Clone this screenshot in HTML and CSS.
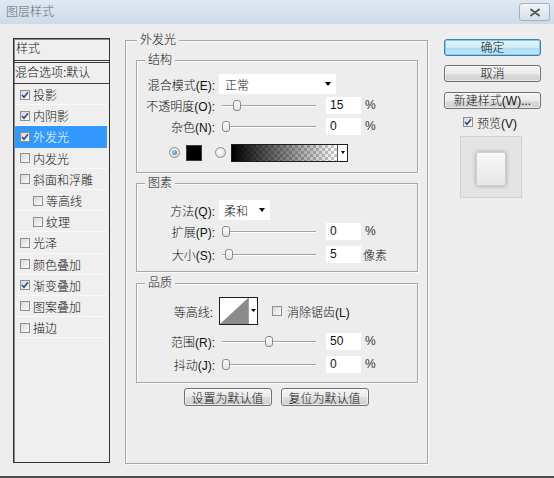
FILE: index.html
```html
<!DOCTYPE html>
<html lang="zh-CN">
<head>
<meta charset="utf-8">
<title>图层样式</title>
<link rel="stylesheet" href="styles.css">
</head>
<body>
<div class="window">
  <div class="titlebar">
    <span class="title">图层样式</span>
    <span class="close"><svg width="12" height="9" viewBox="0 0 12 9"><path d="M2 1.5 L10 7.5 M10 1.5 L2 7.5" stroke="#5a5a5a" stroke-width="2" stroke-linecap="round"/></svg></span>
  </div>
  <div class="content">
    <div class="list">
      <div class="list-head">样式</div>
      <div class="list-blend">混合选项:默认</div>
      <div class="item"><span class="cb"><svg width="8" height="8" viewBox="0 0 8 8"><path d="M1 4 L3 6.2 L7 1.3" fill="none" stroke="#2b4a8a" stroke-width="1.6"/></svg></span>投影</div>
      <div class="item"><span class="cb"><svg width="8" height="8" viewBox="0 0 8 8"><path d="M1 4 L3 6.2 L7 1.3" fill="none" stroke="#2b4a8a" stroke-width="1.6"/></svg></span>内阴影</div>
      <div class="item sel"><span class="cb"><svg width="8" height="8" viewBox="0 0 8 8"><path d="M1 4 L3 6.2 L7 1.3" fill="none" stroke="#2b4a8a" stroke-width="1.6"/></svg></span>外发光</div>
      <div class="item"><span class="cb"></span>内发光</div>
      <div class="item"><span class="cb"></span>斜面和浮雕</div>
      <div class="item sub"><span class="cb"></span>等高线</div>
      <div class="item sub"><span class="cb"></span>纹理</div>
      <div class="item"><span class="cb"></span>光泽</div>
      <div class="item"><span class="cb"></span>颜色叠加</div>
      <div class="item"><span class="cb"><svg width="8" height="8" viewBox="0 0 8 8"><path d="M1 4 L3 6.2 L7 1.3" fill="none" stroke="#2b4a8a" stroke-width="1.6"/></svg></span>渐变叠加</div>
      <div class="item"><span class="cb"></span>图案叠加</div>
      <div class="item"><span class="cb"></span>描边</div>
    </div>

    <div class="main">
      <div class="group outer">
        <span class="legend lg-outer">外发光</span>

        <div class="group g1">
          <span class="legend">结构</span>
          <div class="row r20">
            <span class="lbl">混合模式(E):</span>
            <div class="select w-blend"><span>正常</span><i class="arrow"></i></div>
          </div>
          <div class="row r18 mt2">
            <span class="lbl">不透明度(O):</span>
            <div class="slider"><span class="thumb" style="left:11px"></span></div>
            <div class="num">15</div><span class="unit">%</span>
          </div>
          <div class="row r18 mt3">
            <span class="lbl">杂色(N):</span>
            <div class="slider"><span class="thumb" style="left:0px"></span></div>
            <div class="num">0</div><span class="unit">%</span>
          </div>
          <div class="row r19 mt8 colors">
            <span class="radio on"></span>
            <span class="swatch"></span>
            <span class="radio"></span>
            <div class="grad"><span class="grad-fill"></span><span class="grad-arrow"><i class="arrow small"></i></span></div>
          </div>
        </div>

        <div class="group g2">
          <span class="legend">图素</span>
          <div class="row r20">
            <span class="lbl">方法(Q):</span>
            <div class="select w-method"><span>柔和</span><i class="arrow"></i></div>
          </div>
          <div class="row r18 mt2">
            <span class="lbl">扩展(P):</span>
            <div class="slider"><span class="thumb" style="left:0px"></span></div>
            <div class="num">0</div><span class="unit">%</span>
          </div>
          <div class="row r18 mt5">
            <span class="lbl">大小(S):</span>
            <div class="slider"><span class="thumb" style="left:3px"></span></div>
            <div class="num">5</div><span class="unit unit-px">像素</span>
          </div>
        </div>

        <div class="group g3">
          <span class="legend">品质</span>
          <div class="row r28">
            <span class="lbl lbl-contour">等高线:</span>
            <svg class="contour" width="39" height="28" viewBox="0 0 39 28">
              <rect x="0.5" y="0.5" width="38" height="27" fill="#fff" stroke="#1e1e1e"/>
              <polygon points="1,27 29,1 29,27" fill="#8b8b8b"/>
              <line x1="29.5" y1="1" x2="29.5" y2="27" stroke="#a0a0a0"/>
              <polygon points="32,12 37,12 34.5,15" fill="#000"/>
            </svg>
            <span class="cb cb-aa"></span><span class="aa">消除锯齿(L)</span>
          </div>
          <div class="row r18 mt7">
            <span class="lbl">范围(R):</span>
            <div class="slider"><span class="thumb" style="left:43px"></span></div>
            <div class="num">50</div><span class="unit">%</span>
          </div>
          <div class="row r18 mt5">
            <span class="lbl">抖动(J):</span>
            <div class="slider"><span class="thumb" style="left:0px"></span></div>
            <div class="num">0</div><span class="unit">%</span>
          </div>
        </div>

        <div class="defaults">
          <button class="btn b-def">设置为默认值</button>
          <button class="btn b-def">复位为默认值</button>
        </div>
      </div>
    </div>

    <div class="side">
      <button class="btn primary">确定</button>
      <button class="btn mt9">取消</button>
      <button class="btn mt10">新建样式(W)...</button>
      <div class="pv-check"><span class="cb"><svg width="8" height="8" viewBox="0 0 8 8"><path d="M1 4 L3 6.2 L7 1.3" fill="none" stroke="#2b4a8a" stroke-width="1.6"/></svg></span><span>预览(V)</span></div>
      <div class="preview"><span class="pv-square"></span></div>
    </div>
  </div>
</div>
</body>
</html>
```

FILE: styles.css
```css
* { box-sizing: border-box; }
html, body { margin: 0; padding: 0; }
body {
  width: 554px;
  height: 478px;
  overflow: hidden;
  font-family: "Liberation Sans", "Noto Sans CJK SC", sans-serif;
  font-size: 12px;
  font-weight: 300;
  color: #111;
  background: #ededed;
}
.window {
  width: 554px;
  height: 478px;
  display: flex;
  flex-direction: column;
  background: #ededed;
  border-bottom: 2px solid #4d4d4d;
}
.titlebar {
  height: 24px;
  flex: none;
  display: flex;
  align-items: center;
  justify-content: space-between;
  padding: 0 4px 0 6px;
  background: linear-gradient(#dfe8f2, #cddbea);
}
.title { color: #666; line-height: 14px; }
.close {
  width: 31px;
  height: 18px;
  border: 1px solid #a3afbd;
  border-radius: 3px;
  background: linear-gradient(#f2f5f9, #d6dfe9);
  display: flex;
  align-items: center;
  justify-content: center;
}
.content {
  flex: 1;
  display: flex;
  align-items: flex-start;
  padding: 14px 0 0 13px;
}

/* left list */
.list {
  width: 97px;
  height: 425px;
  flex: none;
  border: 1px solid #333;
  background: #efefef;
  box-shadow: inset 1px 1px 0 #8a8a8a;
}
.list-head {
  height: 24px;
  line-height: 21px;
  padding-left: 2px;
  border-bottom: 3px double #3a3a3a;
}
.list-blend {
  height: 21px;
  line-height: 20px;
  padding-left: 1px;
  border-bottom: 1px solid #3a3a3a;
}
.item {
  height: 21.2px;
  display: flex;
  align-items: center;
  margin: 0 2px 0 1px;
  padding-left: 5px;
  box-shadow: inset 0 -1px 0 #f9f9f9;
  white-space: nowrap;
}
.item.sub { padding-left: 18px; }
.item.sel { background: #3399ff; color: #fff; box-shadow: none; }
.item .cb { margin-right: 3px; }

.cb {
  width: 10px;
  height: 10px;
  flex: none;
  border: 1px solid #8e8f8f;
  background: linear-gradient(135deg, #d8d8d8, #fbfbfb);
  display: inline-flex;
  align-items: center;
  justify-content: center;
}

/* main */
.main { width: 303px; flex: none; margin: 2px 0 0 15px; }
.group {
  position: relative;
  border: 1px solid #a6a6a6;
  box-shadow: 1px 1px 0 #fbfbfb, inset 1px 1px 0 #fbfbfb;
}
.legend {
  position: absolute;
  top: -8px;
  left: 8px;
  padding: 0 3px;
  line-height: 14px;
  background: #ededed;
}
.lg-outer { left: 11px; }
.outer { height: 424px; padding: 19px 9px 0 10px; }
.g1 { height: 113px; padding: 13px 0 0 8px; }
.g2 { height: 89px; margin-top: 10px; padding: 16px 0 0 8px; }
.g3 { height: 100px; margin-top: 11px; padding: 13px 0 0 8px; }

.row { display: flex; align-items: center; white-space: nowrap; }
.r18 { height: 18px; }
.r19 { height: 19px; }
.r20 { height: 20px; }
.r28 { height: 28px; }
.mt2 { margin-top: 2px; }
.mt3 { margin-top: 3px; }
.mt5 { margin-top: 5px; }
.mt7 { margin-top: 7px; }
.mt8 { margin-top: 8px; }
.mt9 { margin-top: 9px; }
.mt10 { margin-top: 10px; }

.lbl { width: 70px; flex: none; text-align: right; margin-right: 4px; }
.lbl-contour { padding-right: 2px; }

.select {
  height: 20px;
  background: #fff;
  display: flex;
  align-items: center;
  justify-content: space-between;
  padding: 0 5px 0 6px;
}
.w-blend { width: 117px; }
.w-method { width: 51px; padding-left: 5px; }
.arrow {
  width: 0;
  height: 0;
  border-left: 3px solid transparent;
  border-right: 3px solid transparent;
  border-top: 4px solid #000;
}
.arrow.small { border-left-width: 2.5px; border-right-width: 2.5px; border-top-width: 3px; }

.slider { position: relative; width: 94px; height: 18px; margin-left: 3px; flex: none; }
.slider::before {
  content: "";
  position: absolute;
  left: 0;
  right: 0;
  top: 9px;
  height: 1px;
  background: #a3a3a3;
  box-shadow: 0 1px 0 #fff;
}
.thumb {
  position: absolute;
  top: 4px;
  width: 8px;
  height: 11px;
  border: 1px solid #8a8a8a;
  border-radius: 3px;
  background: linear-gradient(#ffffff, #e2e2e2);
}
.num {
  width: 35px;
  height: 17px;
  margin-left: 10px;
  padding-left: 4px;
  line-height: 17px;
  background: #fff;
  flex: none;
}
.unit { margin-left: 4px; color: #333; }
.unit-px { margin-left: 2px; color: #111; }

.colors { padding-left: 24px; }
.radio {
  width: 11px;
  height: 11px;
  flex: none;
  border-radius: 50%;
  border: 1px solid #8d8d8d;
  background: radial-gradient(circle at 40% 40%, #ffffff, #d2d2d2);
  display: flex;
  align-items: center;
  justify-content: center;
}
.radio.on::after {
  content: "";
  width: 5px;
  height: 5px;
  border-radius: 50%;
  background: radial-gradient(circle at 35% 35%, #9fd6f5, #1d6fb5);
}
.swatch {
  width: 16px;
  height: 16px;
  margin-left: 6px;
  background: #000;
  border: 1px solid #3a3a3a;
  flex: none;
}
.swatch + .radio { margin-left: 13px; }
.grad {
  width: 117px;
  height: 18px;
  margin-left: 5px;
  border: 1px solid #1e1e1e;
  display: flex;
  flex: none;
}
.grad-fill {
  flex: 1;
  background:
    linear-gradient(to right, #000 0%, rgba(0,0,0,0) 100%),
    repeating-conic-gradient(#c9c9c9 0 25%, #ffffff 0 50%) 0 0 / 6px 6px;
}
.grad-arrow {
  width: 10px;
  background: #fff;
  border-left: 1px solid #555;
  display: flex;
  align-items: center;
  justify-content: center;
}

.contour { flex: none; display: block; }
.cb-aa { margin-left: 14px; }
.aa { margin-left: 5px; }

.defaults { display: flex; justify-content: center; gap: 9px; margin-top: 5px; padding-right: 2px; }

.btn {
  height: 18px;
  padding: 0;
  font: inherit;
  color: #111;
  border: 1px solid #707070;
  border-radius: 3px;
  background: linear-gradient(#f3f3f3 0%, #ebebeb 50%, #dddddd 51%, #cfcfcf 100%);
  box-shadow: inset 0 0 0 1px rgba(255,255,255,0.55);
  white-space: nowrap;
}
.b-def { width: 88px; }

.side { width: 97px; flex: none; margin: 1px 0 0 16px; display: flex; flex-direction: column; }
.side .btn { width: 97px; height: 17px; line-height: 14px; }
.btn.primary {
  border-color: #3c7fb1;
  background: linear-gradient(#e6f5fc 0%, #d0ecfa 50%, #a9dbf6 51%, #c3e6f8 100%);
  box-shadow: inset 0 0 0 1px #7fcaf0;
}
.pv-check {
  display: flex;
  align-items: center;
  height: 10px;
  margin-top: 8px;
  padding-left: 19px;
  white-space: nowrap;
}
.pv-check .cb { margin-right: 4px; }
.preview {
  width: 62px;
  height: 62px;
  margin: 9px 0 0 16px;
  background: #e4e4e4;
  border: 1px solid #d2d2d2;
  display: flex;
  align-items: center;
  justify-content: center;
}
.pv-square {
  width: 30px;
  height: 34px;
  margin-top: 3px;
  border-radius: 2px;
  border: 1px solid #cfcfcf;
  background: linear-gradient(#f8f8f8, #e6e6e6);
  box-shadow: 0 0 4px rgba(0,0,0,0.3);
}
```
